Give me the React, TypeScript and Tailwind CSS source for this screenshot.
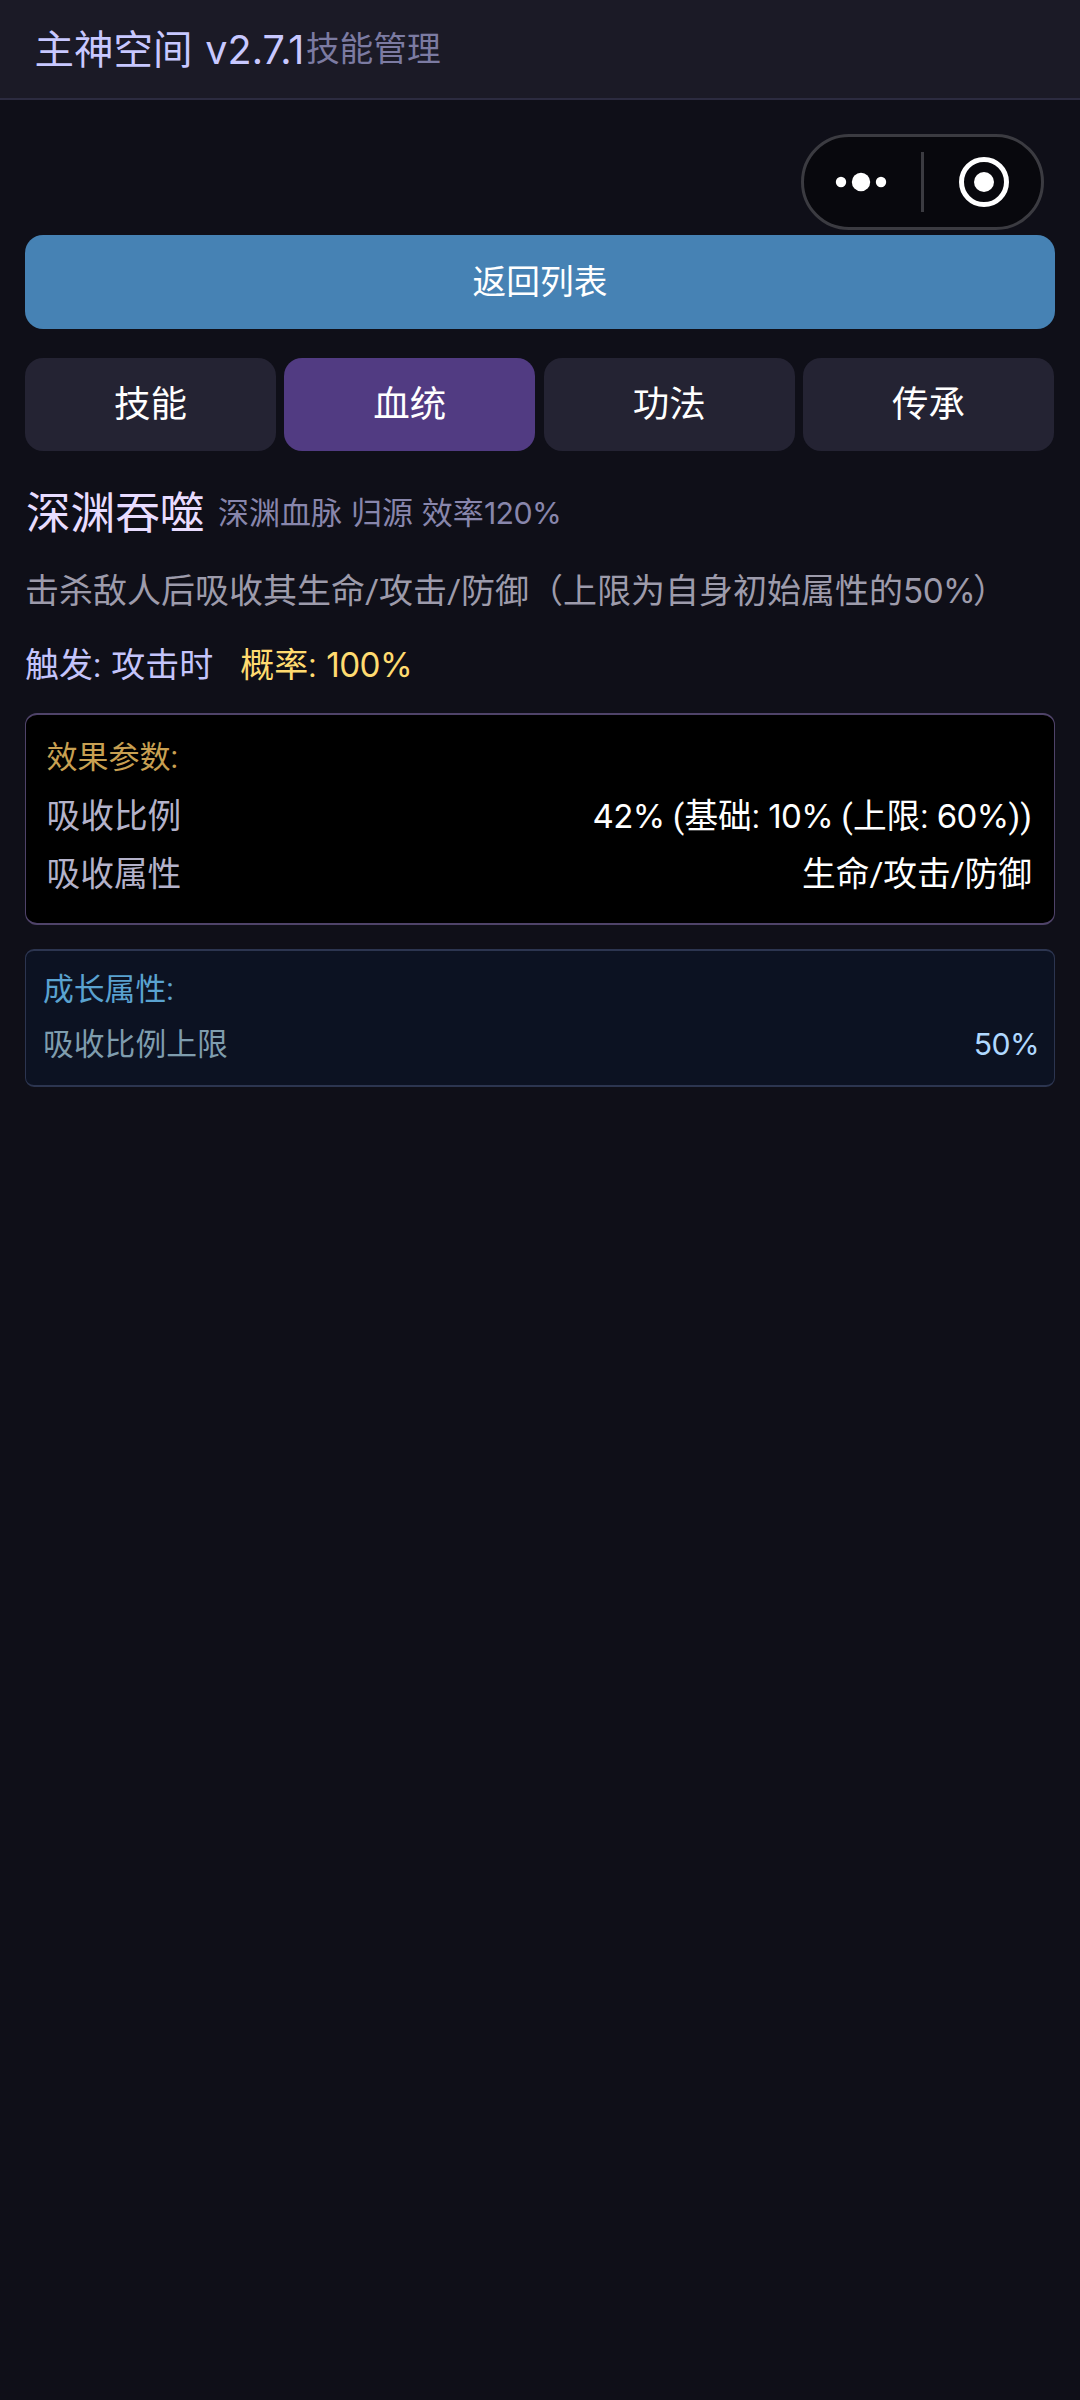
import React from 'react'
import clsx from 'clsx'

interface IParam {
    label: string
    value: string
}

const tabs = ['技能', '血统', '功法', '传承']

const effects: IParam[] = [
    { label: '吸收比例', value: '42% (基础: 10% (上限: 60%))' },
    { label: '吸收属性', value: '生命/攻击/防御' },
]

const growths: IParam[] = [
    { label: '吸收比例上限', value: '50%' },
]

// percentages use a rounder, slightly wider face than the rest of the text
const Text = ({ children }: { children: string }) => (
    <>
        {children.split(/(\d+%)/).map((part, i) =>
            i % 2 ? <span key={i} className="font-['Inter',sans-serif] text-[0.98em] leading-none tracking-[-0.02em]">{part}</span> : part
        )}
    </>
)

const Capsule = () => (
    <div className="absolute left-[801px] top-[134px] flex h-24 w-[243px] items-center rounded-full border-[3px] border-[#3b3b41] bg-[#08080d]">
        <svg className="ml-[31px]" width="52" height="20" viewBox="0 0 52 20" fill="#fff">
            <circle cx="6" cy="10" r="5.2" />
            <circle cx="26" cy="10" r="9.2" />
            <circle cx="46" cy="10" r="5.2" />
        </svg>
        <div className="ml-[34px] h-[60px] w-[3px] bg-[#3b3b41]" />
        <svg className="ml-[35px]" width="50" height="50" viewBox="0 0 50 50">
            <circle cx="25" cy="25" r="22.5" fill="none" stroke="#fff" strokeWidth="5" />
            <circle cx="25" cy="25" r="10" fill="#fff" />
        </svg>
    </div>
)

const App = () => {
    return (
        <div className="relative min-h-[2400px] w-[1080px] whitespace-pre bg-[#0f0f18] font-['Roboto','Noto_Sans_CJK_SC',sans-serif] text-white">
            <header className="flex h-[100px] items-center border-b-2 border-[#2c2b40] bg-[#1b1a26] pt-0.5 pl-[34.5px]">
                <h1 className="text-[39.5px] leading-[56px] text-[#c8c8ff]">
                    主神空间<span className="font-['Inter',sans-serif] tracking-[0.1px] [word-spacing:1.5px]"> v2.7.1</span>
                </h1>
                <span className="pl-[1.5px] text-[33.7px] leading-[48px] text-[#7c7ba2]">技能管理</span>
            </header>

            <Capsule />

            <main className="px-[25px] pt-[135px]">
                <button className="block h-[94px] w-full rounded-[18px] bg-[#4682b4] pt-0.5 text-[33.7px]">返回列表</button>

                <div className="mt-[29px] grid grid-cols-4 gap-[8.5px] pr-px">
                    {tabs.map((tab) => (
                        <button
                            key={tab}
                            className={clsx('h-[93px] rounded-[18px] pt-0.5 text-[36.5px]', tab === '血统' ? 'bg-[#513b82]' : 'bg-[#242333]')}
                        >
                            {tab}
                        </button>
                    ))}
                </div>

                <div className="mt-8 flex h-[60px] items-center gap-[13.5px] pt-0.5 pl-px">
                    <h2 className="text-[44.6px] text-[#e8dcff]">深渊吞噬</h2>
                    <span className="text-[31px] text-[#8886ac] [word-spacing:1.3px]"><Text>深渊血脉 归源 效率120%</Text></span>
                </div>

                <p className="mt-6 h-12 text-[34px] leading-[48px] text-[#9d9bab]">
                    <Text>击杀敌人后吸收其生命/攻击/防御（上限为自身初始属性的50%</Text>
                    <span className="-ml-0.5">）</span>
                </p>

                <div className="mt-[26px] flex h-12 gap-[27px] text-[34px] leading-[48px] [word-spacing:1.5px]">
                    <span className="text-[#c4c4fb]">触发: 攻击时</span>
                    <span className="text-[#ffdb70]"><Text>概率: 100%</Text></span>
                </div>

                <section className="mt-6 rounded-[12px] border-x border-y-2 border-[#4f4369] bg-black pt-[23px] pr-[22px] pb-[19px] pl-[20.5px]">
                    <h3 className="mb-[10px] text-[31px] leading-[40px] text-[#c8a052]">效果参数:</h3>
                    {effects.map((itm) => (
                        <div key={itm.label} className="flex h-[58px] justify-between text-[33.7px] leading-[58px]">
                            <span className="text-[#b4b2ca]">{itm.label}</span>
                            <span><Text>{itm.value}</Text></span>
                        </div>
                    ))}
                </section>

                <section className="mt-6 rounded-[9px] border-x border-y-2 border-[#2c3550] bg-[#0c1222] pt-[20px] pr-[15px] pb-[12px] pl-[17px]">
                    <h3 className="mb-2 text-[30.8px] leading-[38px] text-[#5aa2d0]">成长属性:</h3>
                    {growths.map((itm) => (
                        <div key={itm.label} className="flex h-14 justify-between text-[30.8px] leading-[56px]">
                            <span className="text-[#7f9dae]">{itm.label}</span>
                            <span className="text-[#b0d8ff]"><Text>{itm.value}</Text></span>
                        </div>
                    ))}
                </section>
            </main>
        </div>
    )
}

export default App
